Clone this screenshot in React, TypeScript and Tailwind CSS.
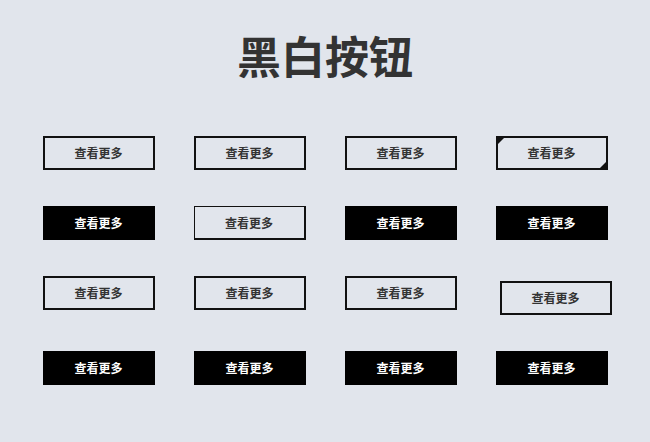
import React from "react";

const font = { fontFamily: '"Noto Sans CJK SC", "Noto Sans", sans-serif' };

function Outline({ className = "" }: { className?: string }) {
  return (
    <div
      className={`relative flex h-[34px] w-[112px] items-center justify-center border-2 border-[#111] text-[12px] font-bold text-[#333] ${className}`}
    >
      查看更多
    </div>
  );
}

function Solid({ className = "" }: { className?: string }) {
  return (
    <div
      className={`flex h-[34px] w-[112px] items-center justify-center bg-black text-[12px] font-bold text-white ${className}`}
    >
      查看更多
    </div>
  );
}

function Cornered() {
  return (
    <div className="relative flex h-[34px] w-[112px] items-center justify-center border-2 border-[#111] text-[12px] font-bold text-[#333]">
      <span className="absolute left-0 top-0 h-0 w-0 border-l-[3px] border-t-[3px] border-l-[#111] border-t-[#111] border-r-[3px] border-b-[3px] border-r-transparent border-b-transparent" />
      <span className="absolute bottom-0 right-0 h-0 w-0 border-r-[3px] border-b-[3px] border-r-[#111] border-b-[#111] border-l-[3px] border-t-[3px] border-l-transparent border-t-transparent" />
      查看更多
    </div>
  );
}

export default function App() {
  return (
    <div className="min-h-[442px] w-full bg-[#e1e5ec]" style={font}>
      <div className="flex flex-col items-center pt-[33px]">
        <h1 className="text-[44px] font-bold leading-[44px] text-[#333]">黑白按钮</h1>
        <div className="mt-[59px] grid grid-cols-[112px_112px_112px_112px] gap-x-[39px] gap-y-[36px]">
          <Outline />
          <Outline />
          <Outline />
          <Cornered />

          <Solid />
          <div className="flex h-[34px] w-[112px] items-center justify-center border-b-2 border-l border-r-2 border-t border-[#111] text-[12px] font-bold text-[#333]">
            查看更多
          </div>
          <Solid />
          <Solid />

          <Outline />
          <Outline />
          <Outline />
          <Outline className="ml-[4px] mt-[5px]" />

          <Solid />
          <Solid />
          <Solid />
          <Solid />
        </div>
      </div>
    </div>
  );
}
